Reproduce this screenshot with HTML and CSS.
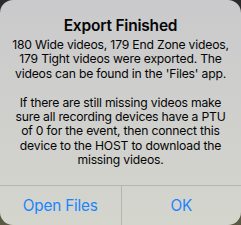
FILE: index.html
```html
<!DOCTYPE html>
<html>
<head>
<meta charset="utf-8">
<link rel="stylesheet" href="styles.css">
</head>
<body>
<div class="alert">
  <div class="content">
    <div class="title">Export Finished</div>
    <div class="message">180 Wide videos, 179 End Zone videos,<br>179 Tight videos were exported. The<br>videos can be found in the 'Files' app.<br><br>If there are still missing videos make<br>sure all recording devices have a PTU<br>of 0 for the event, then connect this<br>device to the HOST to download the<br>missing videos.</div>
  </div>
  <div class="actions">
    <div class="btn">Open Files</div>
    <div class="btn">OK</div>
  </div>
</div>
</body>
</html>
```
FILE: styles.css
```css
html, body {
  margin: 0;
  padding: 0;
}
body {
  width: 241px;
  height: 225px;
  overflow: hidden;
  background: linear-gradient(#2a2a2a, #5a5942);
  font-family: Inter, "Noto Sans", sans-serif;
}
.alert {
  width: 241px;
  height: 225px;
  border-radius: 13px;
  background: linear-gradient(#cacacc, #d4d5cd);
  display: flex;
  flex-direction: column;
  overflow: hidden;
}
.content {
  box-sizing: border-box;
  padding-top: 16px;
  height: 185px;
  text-align: center;
  color: #050505;
}
.title {
  font-size: 15.5px;
  font-weight: 600;
  line-height: 20px;
  letter-spacing: -0.2px;
}
.message {
  margin-top: 2px;
  font-size: 12.2px;
  line-height: 14.4px;
  letter-spacing: -0.2px;
  white-space: nowrap;
}
.actions {
  border-top: 1px solid #b5b6ae;
  display: grid;
  grid-template-columns: 1fr 1fr;
  flex: 1;
}
.btn {
  display: flex;
  align-items: center;
  justify-content: center;
  color: #1a84ff;
  font-size: 15.3px;
  letter-spacing: -0.2px;
}
.btn + .btn {
  border-left: 1px solid #b5b6ae;
}
```
